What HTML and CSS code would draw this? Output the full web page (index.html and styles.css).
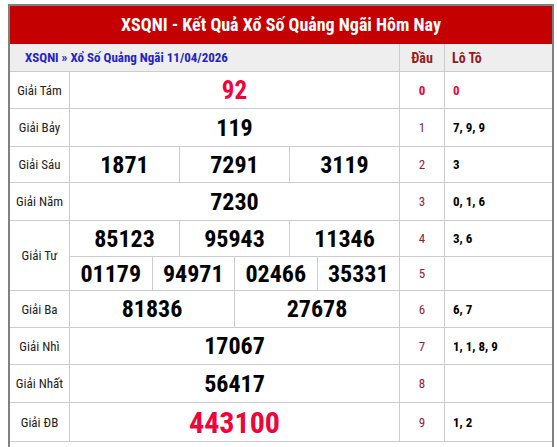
FILE: index.html
```html
<!DOCTYPE html>
<html lang="vi">
<head>
<meta charset="utf-8">
<title>XSQNI - Kết Quả Xổ Số Quảng Ngãi Hôm Nay</title>
<link rel="stylesheet" href="styles.css">
</head>
<body>
<div class="box">
  <h2 class="title">XSQNI - Kết Quả Xổ Số Quảng Ngãi Hôm Nay</h2>
  <div class="kq">
    <div class="crumb s13"><span><a href="#">XSQNI</a> » <a href="#">Xổ Số Quảng Ngãi 11/04/2026</a></span></div>
    <div class="hd">Đầu</div>
    <div class="hl">Lô Tô</div>

    <div class="lbl">Giải Tám</div>
    <div class="num s12 red g8">92</div>
    <div class="dau red b">0</div>
    <div class="lt red">0</div>

    <div class="lbl">Giải Bảy</div>
    <div class="num s12">119</div>
    <div class="dau">1</div>
    <div class="lt">7, 9, 9</div>

    <div class="lbl">Giải Sáu</div>
    <div class="num s4">1871</div>
    <div class="num s4">7291</div>
    <div class="num s4">3119</div>
    <div class="dau">2</div>
    <div class="lt">3</div>

    <div class="lbl">Giải Năm</div>
    <div class="num s12">7230</div>
    <div class="dau">3</div>
    <div class="lt">0, 1, 6</div>

    <div class="lbl r2">Giải Tư</div>
    <div class="num s4">85123</div>
    <div class="num s4">95943</div>
    <div class="num s4">11346</div>
    <div class="dau">4</div>
    <div class="lt">3, 6</div>
    <div class="num s3">01179</div>
    <div class="num s3">94971</div>
    <div class="num s3">02466</div>
    <div class="num s3">35331</div>
    <div class="dau">5</div>
    <div class="lt"></div>

    <div class="lbl">Giải Ba</div>
    <div class="num s6">81836</div>
    <div class="num s6">27678</div>
    <div class="dau">6</div>
    <div class="lt">6, 7</div>

    <div class="lbl">Giải Nhì</div>
    <div class="num s12">17067</div>
    <div class="dau">7</div>
    <div class="lt">1, 1, 8, 9</div>

    <div class="lbl">Giải Nhất</div>
    <div class="num s12">56417</div>
    <div class="dau">8</div>
    <div class="lt"></div>

    <div class="lbl">Giải ĐB</div>
    <div class="num s12 red db">443100</div>
    <div class="dau">9</div>
    <div class="lt">1, 2</div>
  </div>
</div>
</body>
</html>
```
FILE: styles.css
```css
html, body {
  margin: 0;
  padding: 0;
  background: #fff;
}
body {
  font-family: "Roboto", "Liberation Sans", sans-serif;
  font-stretch: 75%;
}
.box {
  margin: 4px 3px 0 8px;
  border: 2px solid #808080;
  border-bottom: none;
  height: 460px;
  box-sizing: border-box;
}
.title {
  margin: 0;
  height: 38px;
  background: #c40000;
  color: #fff;
  font-size: 18px;
  font-weight: 700;
  line-height: 38px;
  text-align: center;
}
.kq {
  display: grid;
  grid-template-columns: 59px repeat(12, 1fr) 44px 107px;
  grid-template-rows: 27px 36px 37px 35px 37px 35px 33px 36px 36px 37px 38px;
  gap: 1px;
  background: #cccccc;
  border-bottom: 1px solid #cccccc;
}
.kq > div {
  background: #fff;
  display: flex;
  align-items: center;
  justify-content: center;
}
.kq > .crumb {
  background: #eeeeee;
  justify-content: flex-start;
  padding-left: 15px;
  font-size: 13px;
  font-weight: 700;
  color: #2424c8;
}
.crumb a {
  color: #2424c8;
  text-decoration: none;
}
.kq > .hd, .kq > .hl {
  background: #eeeeee;
  color: #961a1a;
  font-size: 14px;
  font-weight: 700;
}
.kq > .hl {
  justify-content: flex-start;
  padding-left: 7px;
}
.s13 { grid-column: span 13; }
.s12 { grid-column: span 12; }
.s6 { grid-column: span 6; }
.s4 { grid-column: span 4; }
.s3 { grid-column: span 3; }
.r2 { grid-row: span 2; }
.lbl {
  font-size: 13px;
  color: #222;
}
.num {
  font-size: 24px;
  font-weight: 700;
  color: #000;
}
.kq > .g8 { font-size: 25px; }
.kq > .db { font-size: 30px; }
.dau {
  font-size: 13px;
  color: #961a3a;
}
.kq > .lt {
  justify-content: flex-start;
  padding-left: 8px;
  font-size: 13px;
  font-weight: 700;
  color: #000;
}
.kq > .red { color: #f0033a; }
.b { font-weight: 700; }
```
